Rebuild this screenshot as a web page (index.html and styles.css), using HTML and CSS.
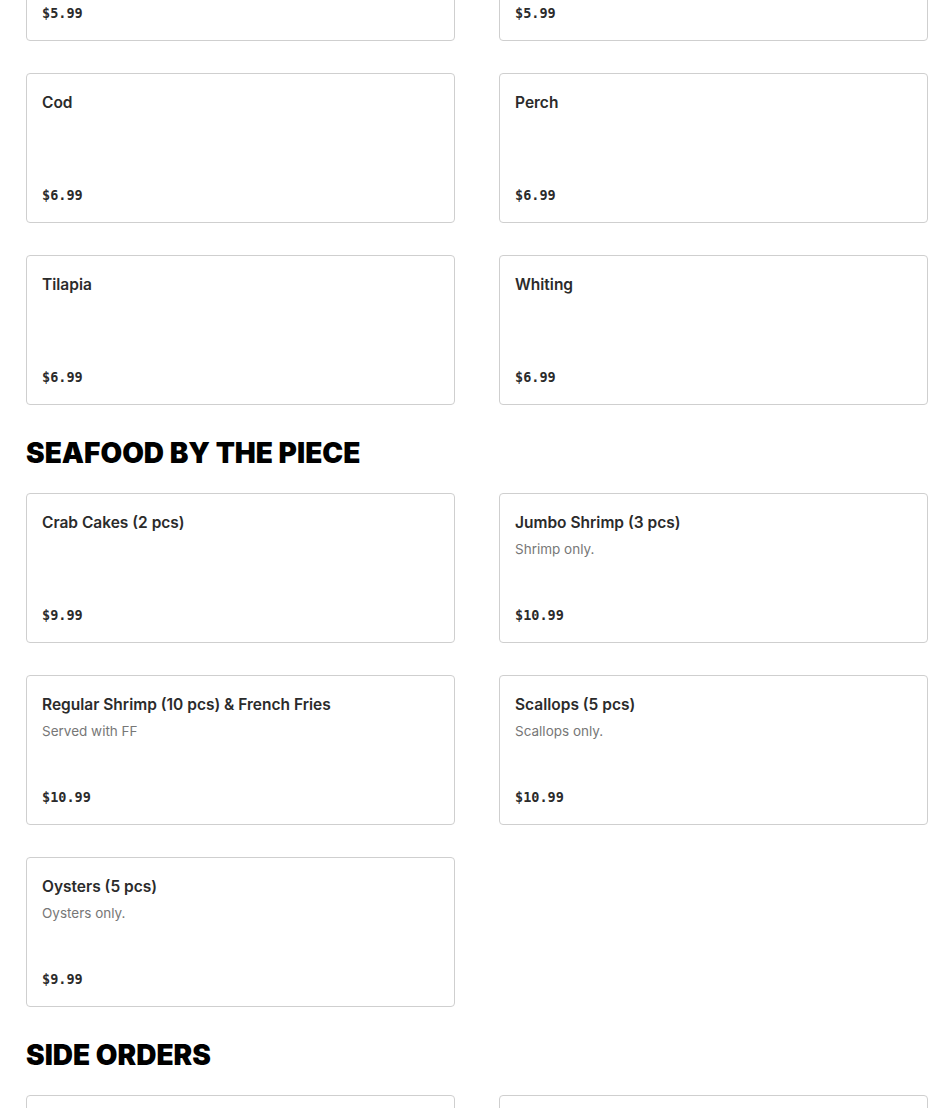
FILE: index.html
```html
<!DOCTYPE html>
<html>
<head>
<meta charset="utf-8">
<link rel="stylesheet" href="styles.css">
</head>
<body>
<main class="menu">
  <section class="section section-first">
    <div class="grid">
      <div class="card"><div class="info"><div class="title"></div></div><div class="price">$5.99</div></div>
      <div class="card"><div class="info"><div class="title"></div></div><div class="price">$5.99</div></div>
      <div class="card"><div class="info"><div class="title">Cod</div></div><div class="price">$6.99</div></div>
      <div class="card"><div class="info"><div class="title">Perch</div></div><div class="price">$6.99</div></div>
      <div class="card"><div class="info"><div class="title">Tilapia</div></div><div class="price">$6.99</div></div>
      <div class="card"><div class="info"><div class="title">Whiting</div></div><div class="price">$6.99</div></div>
    </div>
  </section>
  <section class="section">
    <h2 class="heading">SEAFOOD BY THE PIECE</h2>
    <div class="grid">
      <div class="card"><div class="info"><div class="title">Crab Cakes (2 pcs)</div></div><div class="price">$9.99</div></div>
      <div class="card"><div class="info"><div class="title">Jumbo Shrimp (3 pcs)</div><div class="desc">Shrimp only.</div></div><div class="price">$10.99</div></div>
      <div class="card"><div class="info"><div class="title">Regular Shrimp (10 pcs) &amp; French Fries</div><div class="desc">Served with FF</div></div><div class="price">$10.99</div></div>
      <div class="card"><div class="info"><div class="title">Scallops (5 pcs)</div><div class="desc">Scallops only.</div></div><div class="price">$10.99</div></div>
      <div class="card"><div class="info"><div class="title">Oysters (5 pcs)</div><div class="desc">Oysters only.</div></div><div class="price">$9.99</div></div>
    </div>
  </section>
  <section class="section">
    <h2 class="heading">SIDE ORDERS</h2>
    <div class="grid">
      <div class="card"><div class="info"><div class="title"></div></div><div class="price"></div></div>
      <div class="card"><div class="info"><div class="title"></div></div><div class="price"></div></div>
    </div>
  </section>
</main>
</body>
</html>
```
FILE: styles.css
```css
html, body {
  margin: 0;
  padding: 0;
  background: #ffffff;
}
body {
  font-family: Inter, "Liberation Sans", sans-serif;
  color: #2b2b2b;
  overflow: hidden;
  height: 1108px;
}
.menu {
  padding: 0 22px 0 26px;
}
.section-first {
  margin-top: -109px;
}
.heading {
  margin: 30px 0 22px;
  font-family: Inter, "Liberation Sans", sans-serif;
  font-weight: 900;
  font-size: 28px;
  line-height: 36px;
  color: #000;
  letter-spacing: 0;
}
.grid {
  display: grid;
  grid-template-columns: 1fr 1fr;
  column-gap: 44px;
  row-gap: 32px;
}
.card {
  box-sizing: border-box;
  height: 150px;
  border: 1px solid #cfcfcf;
  border-radius: 4px;
  padding: 16px 16px 17px 15px;
  display: flex;
  flex-direction: column;
  justify-content: space-between;
}
.title {
  font-size: 15.5px;
  line-height: 26px;
  font-weight: 600;
  color: #2b2b2b;
  min-height: 26px;
}
.desc {
  font-size: 13.5px;
  line-height: 20px;
  color: #777;
  margin-top: 3px;
}
.price {
  font-family: "DejaVu Sans Mono", "Liberation Mono", monospace;
  font-size: 13.5px;
  line-height: 20px;
  font-weight: 700;
  color: #2b2b2b;
  min-height: 20px;
}
```
